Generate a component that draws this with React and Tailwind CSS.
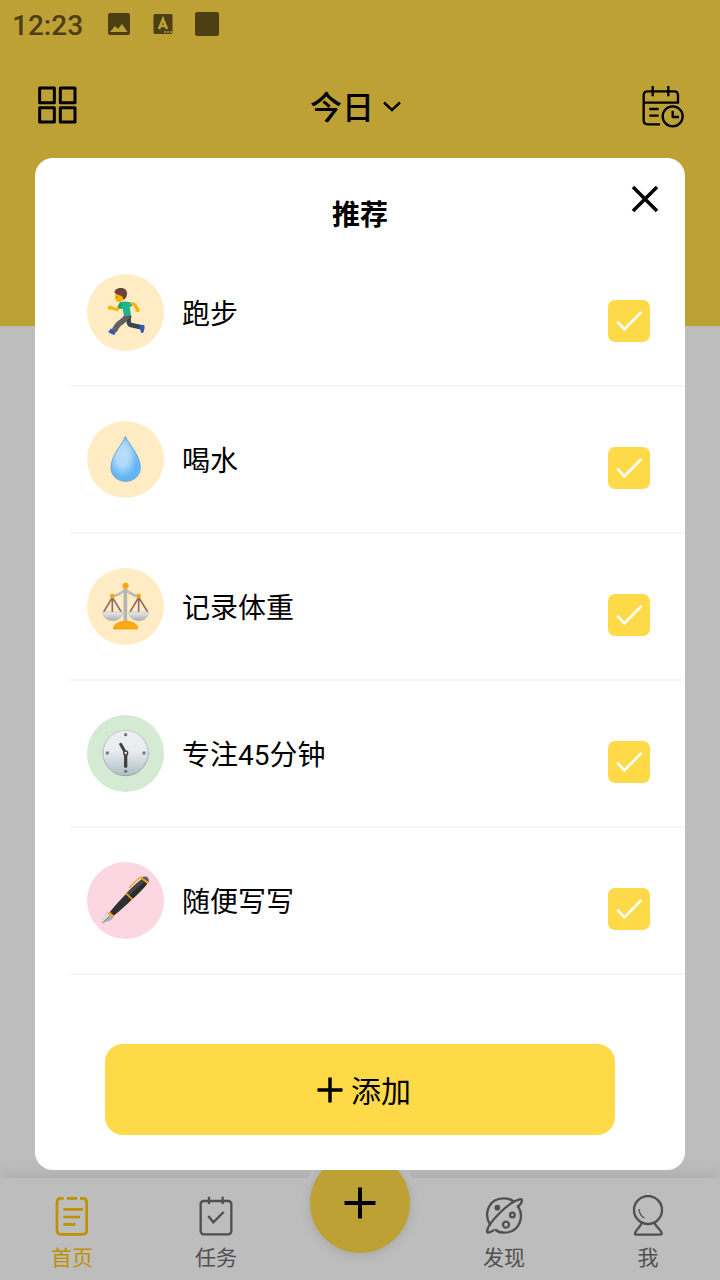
import React, { useState } from 'react';

const RunnerIcon = () => (
  <svg viewBox="22 27 231 231" className="w-full h-full" fill="none" strokeLinejoin="round" aria-hidden="true">
    <path d="M149 150 C145 164 145 173 151 179 L184 187" stroke="#37474f" strokeWidth="14" />
    <path d="M181 179 L194 180 C196 186 194 196 190 204 L184 203 C183 196 180 192 180 186Z" fill="#3558b0" />
    <path d="M143 150 C138 166 124 170 117 177 C110 184 108 190 103 198" stroke="#616161" strokeWidth="17" />
    <path d="M92 190 L108 200 L105 210 C98 208 90 205 86 200 C86 196 88 196 91 197Z" fill="#3558b0" />
    <path d="M121 121 L112 134 L94 128" stroke="#ffb300" strokeWidth="9" />
    <ellipse cx="91" cy="128" rx="7" ry="6" fill="#ffb300" />
    <path d="M148 117 C158 116 163 116 167 122 L174 134" stroke="#ffb300" strokeWidth="10" />
    <ellipse cx="174" cy="136" rx="6" ry="6" fill="#ffb300" />
    <path d="M121 112 C130 109 142 109 151 112 L158 123 L150 127 L154 149 C147 153 140 154 133 153 L129 132 L121 131 L115 125Z" fill="#1fb58c" />
    <path d="M114 125 L121 112 L128 119 L121 132Z" fill="#12a37c" />
    <path d="M107 88 C105 96 106 106 112 110 C121 113 131 110 134 98 L132 86Z" fill="#ffb300" />
    <circle cx="112" cy="96" r="1.8" fill="#5d4037" />
    <path d="M105 84 C103 74 113 69 124 69 C136 69 143 77 142 88 C141 97 137 102 132 104 C128 99 130 94 126 94 C122 90 113 90 105 84Z" fill="#6d4238" />
  </svg>
);

const DropIcon = () => (
  <svg viewBox="22 27 231 231" className="w-full h-full" aria-hidden="true">
    <defs>
      <radialGradient id="drop" cx="0.4" cy="0.42" r="0.5">
        <stop offset="0" stopColor="#bbdefb" />
        <stop offset="0.45" stopColor="#b0dafb" />
        <stop offset="1" stopColor="#64b5f6" />
      </radialGradient>
    </defs>
    <path
      d="M137 73 C129 96 94 130 94 166 C94 193 115 208 138 208 C161 208 182 193 182 166 C182 130 147 96 137 73Z"
      fill="url(#drop)"
      stroke="#6ea5d4"
      strokeWidth="3"
    />
  </svg>
);

const ScalesIcon = () => (
  <svg viewBox="22 24 231 231" className="w-full h-full" fill="none" aria-hidden="true">
    <defs>
      <linearGradient id="pan" x1="0" y1="0" x2="0" y2="1">
        <stop offset="0" stopColor="#eeeeee" />
        <stop offset="1" stopColor="#aaaaaa" />
      </linearGradient>
    </defs>
    <path d="M98 108 C118 108 124 96 137 90 C150 96 157 108 177 108" stroke="#bdbdbd" strokeWidth="8" />
    <path d="M98 112 L72 156 M98 112 V156 M98 112 L125 156" stroke="#8d6e63" strokeWidth="5" />
    <path d="M177 112 L151 156 M177 112 V156 M177 112 L204 156" stroke="#8d6e63" strokeWidth="5" />
    <path d="M137 84 V184" stroke="#b5b5b5" strokeWidth="11" />
    <path d="M69 156 H129 C127 191 71 191 69 156Z" fill="url(#pan)" stroke="#bdbdbd" strokeWidth="2" />
    <path d="M147 156 H207 C205 191 149 191 147 156Z" fill="url(#pan)" stroke="#bdbdbd" strokeWidth="2" />
    <path d="M102 207 V203 C106 177 170 177 174 203 V207Z" fill="#ffa90f" stroke="#e59600" strokeWidth="2" />
    <circle cx="138" cy="77" r="9" fill="#fca60c" />
    <circle cx="98" cy="108" r="7" fill="#fca60c" />
    <circle cx="177" cy="108" r="7" fill="#fca60c" />
  </svg>
);

const ClockIcon = () => (
  <svg viewBox="22 30 231 231" className="w-full h-full" fill="none" strokeLinecap="round" aria-hidden="true">
    <defs>
      <linearGradient id="dial" x1="0" y1="0" x2="0" y2="1">
        <stop offset="0" stopColor="#eeeeee" />
        <stop offset="0.45" stopColor="#e9ecef" />
        <stop offset="1" stopColor="#b0bec5" />
      </linearGradient>
      <linearGradient id="rim" x1="0" y1="0" x2="0" y2="1">
        <stop offset="0" stopColor="#c4cbce" />
        <stop offset="1" stopColor="#90a4ae" />
      </linearGradient>
    </defs>
    <circle cx="138" cy="144" r="68" fill="url(#dial)" stroke="url(#rim)" strokeWidth="3" />
    <g fill="#757575">
      <circle cx="138" cy="89" r="5" />
      <circle cx="138" cy="199" r="5" />
      <circle cx="83" cy="144" r="5" />
      <circle cx="193" cy="144" r="5" />
    </g>
    <path d="M138 144 L123 118" stroke="#424242" strokeWidth="9" />
    <path d="M138 144 V184" stroke="#424242" strokeWidth="10" />
    <circle cx="138" cy="144" r="8" fill="#424242" />
    <circle cx="138" cy="144" r="3.5" fill="#fff" />
  </svg>
);

const PenIcon = () => (
  <svg viewBox="22 27 231 231" className="w-full h-full" fill="none" aria-hidden="true">
    <path d="M68 210 L75 187 C78 181 84 178 90 178 L101 189 C100 196 97 201 90 203Z" fill="#b0b0b0" />
    <path d="M68 210 L75 187 C78 183 82 180 85 180 L88 190Z" fill="#dedede" />
    <path d="M68 210 L88 191" stroke="#616161" strokeWidth="2" />
    <path d="M89 179 C106 158 123 139 142 120 L159 137 C140 156 121 173 101 189Z" fill="#303030" />
    <path d="M140 121 C154 105 170 91 185 79 C193 78 203 86 202 93 C189 110 174 124 158 138Z" fill="#464646" />
    <path d="M148 129 C162 113 178 100 194 86 L202 93 C189 110 174 124 158 138Z" fill="#2b2b2b" />
    <path d="M88 178 L102 191" stroke="#ffa000" strokeWidth="6" />
    <path d="M139 121 L158 139" stroke="#e7a51c" strokeWidth="5" />
    <path d="M186 74 C194 67 211 70 207 88Z" fill="#616161" />
    <path d="M184 74 L205 91" stroke="#ffa000" strokeWidth="5" />
    <path d="M184 72 C167 84 158 92 149 105" stroke="#f5a21b" strokeWidth="4" />
  </svg>
);

const GridIcon = () => (
  <svg viewBox="115 260 120 120" className="size-10" fill="none" stroke="#000" strokeWidth="9" strokeLinejoin="round" aria-hidden="true">
    <path d="M120 266H164V310H120zM182 266H226V310H182zM120 325H164V368H120zM182 325H226V368H182z" />
  </svg>
);

const CalendarIcon = () => (
  <svg viewBox="126 42 129 129" className="size-[43px]" fill="none" stroke="#000" strokeWidth="7" strokeLinejoin="round" aria-hidden="true">
    <path d="M180 160 H143 Q131 160 131 148 V73 Q131 61 143 61 H223 Q234 61 234 73 V95 H131" />
    <path d="M158 45 V76 M205 45 V76" />
    <path d="M148 114 H176 M148 134 H176" />
    <circle cx="218" cy="136" r="30" />
    <path d="M218 119 V138 H237" />
  </svg>
);

const HomeIcon = () => (
  <svg viewBox="156 136 120 126" className="w-10 h-[42px]" fill="none" stroke="currentColor" strokeWidth="8" aria-hidden="true">
    <path d="M191 146 H183 Q171 146 171 158 V242 Q171 254 183 254 H248 Q260 254 260 242 V158 Q260 146 248 146 H240" />
    <path d="M201 146 H231 M190 179 H249 M190 202 H240 M190 224 H226" />
  </svg>
);

const TaskIcon = () => (
  <svg viewBox="588 136 120 126" className="w-10 h-[42px]" fill="none" stroke="currentColor" strokeWidth="7" aria-hidden="true">
    <rect x="602" y="154" width="92" height="100" rx="9" />
    <path d="M627 141 V163 M668 141 V163" />
    <path d="M625 199 L640 218 L671 187" />
  </svg>
);

const PlanetIcon = () => (
  <svg viewBox="72 136 120 126" className="w-10 h-[42px]" fill="none" stroke="currentColor" strokeWidth="7" strokeLinecap="round" aria-hidden="true">
    <path d="M90 225 C71 194 84 146 131 146 C143 146 153 149 161 155" />
    <path d="M174 170 C193 198 181 249 132 249 C121 249 113 246 107 241" />
    <path d="M100 242 C91 249 81 251 81 245 C82 223 142 160 176 150 C184 146 187 150 185 156 C184 161 179 166 174 171" />
    <circle cx="112" cy="174" r="5" fill="currentColor" />
    <circle cx="157" cy="196" r="7" />
    <circle cx="138" cy="225" r="9" />
  </svg>
);

const ProfileIcon = () => (
  <svg viewBox="504 132 120 126" className="w-10 h-[42px]" fill="none" stroke="currentColor" strokeWidth="7" strokeLinejoin="round" aria-hidden="true">
    <circle cx="564" cy="177" r="42" />
    <path d="M546 215 C540 229 525 238 525 248 Q525 251 529 251 H600 Q605 251 605 247 C604 237 589 229 583 215" />
    <path d="M537 174 C538 188 544 196 553 201" strokeWidth="4" />
  </svg>
);

const habits = [
  { id: 'run', name: '跑步', Icon: RunnerIcon, color: 'bg-[#ffecc5]' },
  { id: 'water', name: '喝水', Icon: DropIcon, color: 'bg-[#ffecc5]' },
  { id: 'weight', name: '记录体重', Icon: ScalesIcon, color: 'bg-[#ffecc5]' },
  { id: 'focus', name: '专注45分钟', Icon: ClockIcon, color: 'bg-[#d4ead2]' },
  { id: 'write', name: '随便写写', Icon: PenIcon, color: 'bg-[#fcd6e1]' },
];

const StatusBar = () => (
  <div className="flex items-center h-12 pl-3 pt-1 text-[#67561c]">
    <span className="w-[95px] text-[28px] leading-10 font-medium">12:23</span>
    <svg viewBox="0 0 24 24" className="size-6 -mt-1" aria-hidden="true">
      <path fill="currentColor" fillRule="evenodd" d="M3 1H21Q23 1 23 3V21Q23 23 21 23H3Q1 23 1 21V3Q1 1 3 1ZM3 20H20.500L15 12L11 17L8 14Z" />
    </svg>
    <svg viewBox="0 0 24 24" className="size-6 ml-5 -mt-1" aria-hidden="true">
      <path fill="currentColor" d="M4 2H20Q21.500 2 21.500 3.500V20.500Q21.500 22 20 22H4Q2.500 22 2.500 20.500V3.500Q2.500 2 4 2Z" />
      <path d="M8 17L12 7L16 17M9.500 14H14.500" stroke="#ffda48" strokeWidth="2.500" fill="none" />
      <path d="M13 20H21" stroke="#ffda48" strokeWidth="1.500" strokeDasharray="2 1" />
    </svg>
    <span className="size-6 ml-5 -mt-1 rounded-[2px] bg-current" />
  </div>
);

const TopBar = () => (
  <header className="flex items-center justify-between h-[116px] pl-[38px] pr-[35px]">
    <button type="button" aria-label="全部"><GridIcon /></button>
    <button type="button" className="flex items-center gap-2 pt-1 pr-2 text-[32px] leading-10 font-medium text-black">
      今日
      <svg viewBox="0 0 20 20" className="size-5" fill="none" stroke="currentColor" strokeWidth="2.500" aria-hidden="true">
        <path d="M2 4.500L10 12L18 4.500" />
      </svg>
    </button>
    <button type="button" aria-label="日历"><CalendarIcon /></button>
  </header>
);

const TabItem = ({ label, Icon, active }) => (
  <a
    href="#"
    className={`flex flex-col items-center pt-[17px] text-[21px] leading-[30px] ${active ? 'text-[#ffc400]' : 'text-[#6c6c6c]'}`}
  >
    <Icon />
    <span className="mt-1.5">{label}</span>
  </a>
);

const TabBar = () => (
  <nav className="grid grid-cols-5 h-[102px] bg-white shadow-[0_-4px_16px_rgba(0,0,0,0.1)]">
    <TabItem label="首页" Icon={HomeIcon} active />
    <TabItem label="任务" Icon={TaskIcon} />
    <div className="flex justify-center">
      <div className="relative -top-[33px] flex items-center justify-center size-[116px] rounded-full bg-white">
        <button
          type="button"
          aria-label="新建"
          className="flex items-center justify-center size-[100px] rounded-full bg-[#ffda48] shadow-[0_2px_12px_rgba(0,0,0,0.12)]"
        >
          <svg viewBox="0 0 32 32" className="size-8" stroke="#000" strokeWidth="4" aria-hidden="true">
            <path d="M16 0.500V31.500M0.500 16H31.500" />
          </svg>
        </button>
      </div>
    </div>
    <TabItem label="发现" Icon={PlanetIcon} />
    <TabItem label="我" Icon={ProfileIcon} />
  </nav>
);

const HabitRow = ({ habit, checked, onToggle }) => {
  const { id, name, Icon, color } = habit;

  return (
    <li className="flex items-center h-[147px] pl-[17px] pr-[35px] border-b-2 border-[#f6f6f6]">
      <div className={`size-[77px] rounded-full overflow-hidden ${color}`}>
        <Icon />
      </div>
      <label htmlFor={id} className="flex-1 ml-[18px] pt-1 text-[28px] leading-10 text-black">{name}</label>
      <div className="grid size-[42px] mt-4">
        <input
          id={id}
          type="checkbox"
          checked={checked}
          onChange={onToggle}
          className="peer col-start-1 row-start-1 size-[42px] appearance-none rounded-[7px] border-2 border-[#ffda48] checked:bg-[#ffda48]"
        />
        <svg
          viewBox="54 30 126 126"
          className="col-start-1 row-start-1 size-[42px] pointer-events-none invisible peer-checked:visible"
          fill="none"
          stroke="#fff"
          strokeWidth="8"
          aria-hidden="true"
        >
          <path d="M82 95L103 118L154 66" />
        </svg>
      </div>
    </li>
  );
};

const RecommendDialog = () => {
  const [selected, setSelected] = useState(habits.map((habit) => habit.id));

  const toggle = (id) => {
    setSelected(selected.includes(id) ? selected.filter((item) => item !== id) : [...selected, id]);
  };

  return (
    <div role="dialog" aria-labelledby="dialog-title" className="w-full rounded-[18px] bg-white">
      <div className="grid grid-cols-[1fr_auto_1fr] items-start h-[82px]">
        <h2 id="dialog-title" className="col-start-2 mt-[38px] text-[28px] leading-10 font-bold text-black">推荐</h2>
        <button type="button" aria-label="关闭" className="flex items-center justify-center justify-self-end size-10 mt-[21px] mr-5">
          <svg viewBox="0 0 28 28" className="size-7" stroke="#000" strokeWidth="3.500" aria-hidden="true">
            <path d="M2 2L26 26M26 2L2 26" />
          </svg>
        </button>
      </div>

      <ul className="pl-[35px]">
        {habits.map((habit) => (
          <HabitRow
            key={habit.id}
            habit={habit}
            checked={selected.includes(habit.id)}
            onToggle={() => toggle(habit.id)}
          />
        ))}
      </ul>

      <div className="px-[70px] pt-[69px] pb-[35px]">
        <button
          type="button"
          className="flex items-center justify-center gap-2 w-full h-[91px] pl-2 rounded-[18px] bg-[#ffda48] text-[30px] leading-10 text-black"
        >
          <svg viewBox="0 0 26 26" className="size-[26px]" stroke="#000" strokeWidth="3.500" aria-hidden="true">
            <path d="M13 0.500V25.500M0.500 13H25.500" />
          </svg>
          <span className="pt-1">添加</span>
        </button>
      </div>
    </div>
  );
};

const App = () => (
  <div className="relative flex flex-col min-h-screen overflow-hidden bg-white font-[Roboto,'Noto_Sans_CJK_SC',sans-serif]">
    <div className="h-[326px] bg-[#ffda48]">
      <StatusBar />
      <TopBar />
    </div>
    <main className="flex-1" />
    <TabBar />

    {/* Dimmed layer with the dialog */}
    <div className="absolute inset-0 flex items-start px-[35px] pt-[158px] bg-black/26">
      <RecommendDialog />
    </div>
  </div>
);

export default App;
